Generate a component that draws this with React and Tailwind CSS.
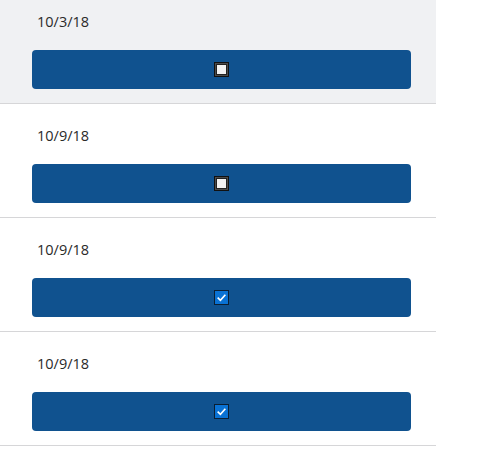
import React from "react";

const rows = [
  { date: "10/3/18", checked: false, active: true },
  { date: "10/9/18", checked: false },
  { date: "10/9/18", checked: true },
  { date: "10/9/18", checked: true },
];

const Check = ({ checked }) => {
  if (checked) {
    return (
      <span className="flex items-center justify-center w-[15px] h-[15px] border border-[#0b1f33] bg-[#0a72d4]">
        <svg width="11" height="11" viewBox="0 0 10 10">
          <path d="M1.5 5.2 L4 7.5 L8.5 2.5" fill="none" stroke="#fff" strokeWidth="1.5" />
        </svg>
      </span>
    );
  }
  return (
    <span className="flex items-center justify-center w-[15px] h-[15px] border border-[#111] bg-[#4b4b4b] p-[1px]">
      <span className="w-full h-full border border-[#222] bg-[#f2f2f2]"></span>
    </span>
  );
};

const App = () => {
  return (
    <div className="w-[436px] font-['Open_Sans','Noto_Sans',sans-serif] text-[14.5px] text-[#2a2a2a]">
      {rows.map((row, i) => (
        <div
          key={i}
          className={`border-b border-[#d6d6d8] pl-8 pb-[14px] ${
            i === 0 ? "pt-[12px] bg-[#f0f1f3]" : "pt-[22px] bg-white"
          }`}
        >
          <div className="h-5 leading-5 pl-[5px]">{row.date}</div>
          <button className="mt-[18px] flex items-center justify-center w-[379px] h-[39px] rounded-[4px] bg-[#10528f]">
            <Check checked={row.checked} />
          </button>
        </div>
      ))}
    </div>
  );
};

export default App;
